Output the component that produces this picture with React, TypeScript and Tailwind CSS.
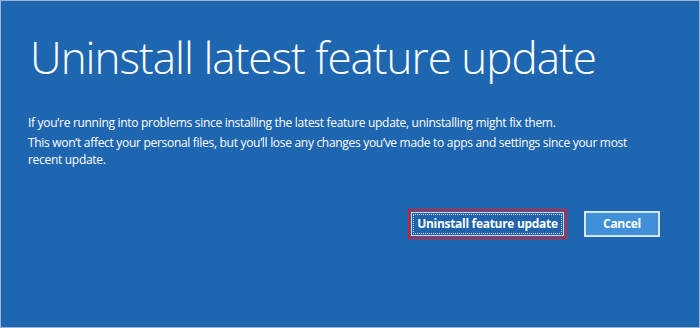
import React from "react";

export default function App() {
  return (
    <div className="w-[700px] h-[328px] bg-[#1f66b0] border border-[#9fb6d8] text-white font-['Open_Sans',sans-serif] flex flex-col">
      <h1 className="ml-[29px] mt-[34px] text-[44px] font-light leading-[44px] tracking-[-1px]">
        Uninstall latest feature update
      </h1>
      <div className="ml-[27px] mt-[35px] w-[612px] text-[12px] leading-[17px] tracking-[-0.3px] flex flex-col gap-[3px]">
        <p>If you’re running into problems since installing the latest feature update, uninstalling might fix them.</p>
        <p>This won’t affect your personal files, but you’ll lose any changes you’ve made to apps and settings since your most recent update.</p>
      </div>
      <div className="mt-[41px] mr-[39px] flex items-center justify-end gap-[17px]">
        <div className="border-2 border-[#d4202c] p-px">
          <button className="block h-[24px] w-[153px] border border-[#c6d7ee] bg-[#1d62aa] p-px">
            <span className="flex h-full items-center justify-center whitespace-nowrap border border-dotted border-white/80 text-[12px] font-bold tracking-[-0.3px]">
              Uninstall feature update
            </span>
          </button>
        </div>
        <button className="flex h-[26px] w-[76px] items-center justify-center border-2 border-[#d5e6f7] bg-[#3f90d8] text-[12px] font-bold tracking-[-0.3px]">
          Cancel
        </button>
      </div>
    </div>
  );
}
